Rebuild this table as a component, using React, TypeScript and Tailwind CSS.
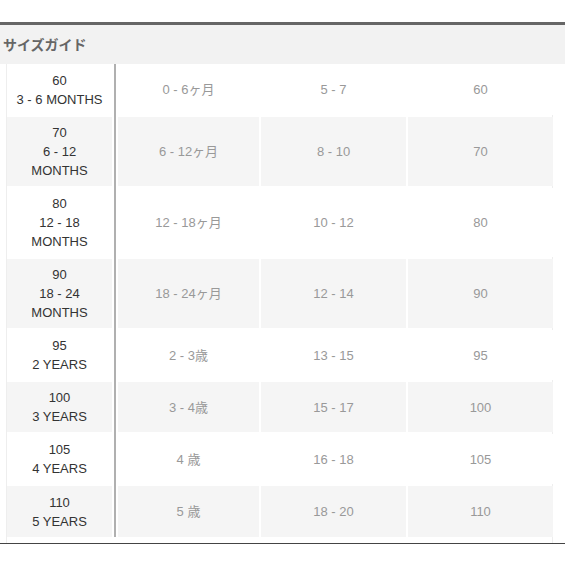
const rows = [
  { size: ["60", "3 - 6 MONTHS"], age: "0 - 6ヶ月", b: "5 - 7", c: "60", h: "h-[51px]" },
  { size: ["70", "6 - 12", "MONTHS"], age: "6 - 12ヶ月", b: "8 - 10", c: "70", h: "h-[69px]" },
  { size: ["80", "12 - 18", "MONTHS"], age: "12 - 18ヶ月", b: "10 - 12", c: "80", h: "h-[69px]" },
  { size: ["90", "18 - 24", "MONTHS"], age: "18 - 24ヶ月", b: "12 - 14", c: "90", h: "h-[69px]" },
  { size: ["95", "2 YEARS"], age: "2 - 3歳", b: "13 - 15", c: "95", h: "h-[50px]" },
  { size: ["100", "3 YEARS"], age: "3 - 4歳", b: "15 - 17", c: "100", h: "h-[50px]" },
  { size: ["105", "4 YEARS"], age: "4 歳", b: "16 - 18", c: "105", h: "h-[50px]" },
  { size: ["110", "5 YEARS"], age: "5 歳", b: "18 - 20", c: "110", h: "h-[51px]" },
];

export default function App() {
  return (
    <div
      className="w-[565px] h-[565px] bg-white overflow-hidden"
      style={{ fontFamily: '"Liberation Sans", Arial, "Noto Sans CJK JP", sans-serif' }}
    >
      <div className="h-[22px]" />
      <div className="border-t-[3px] border-[#666666] bg-[#f2f2f2] h-[42px] flex items-center pl-[3px]">
        <span className="text-[14px] font-bold text-[#666666]" style={{ fontFamily: '"Noto Sans CJK JP", sans-serif' }}>
          サイズガイド
        </span>
      </div>

      <div className="ml-[6px] w-[547px] border-x border-[#eeeeee]">
        <div className="grid grid-cols-[105px_2px_141px_145px_145px] gap-[2px] text-[13px] leading-[19px] text-center">
          <div className="col-start-2 row-start-1 row-span-8 bg-[#b0b0b0]" />
          {rows.map((r, i) => {
            const bg = i % 2 === 1 ? "bg-[#f5f5f5]" : "bg-white";
            return (
              <div key={r.c} className="contents">
                <div className={`${bg} ${r.h} col-start-1 flex flex-col justify-center text-[#333333]`} style={{ gridRowStart: i + 1 }}>
                  {r.size.map((s) => (
                    <span key={s}>{s}</span>
                  ))}
                </div>
                <div className={`${bg} ${r.h} col-start-3 flex items-center justify-center text-[#999999]`} style={{ gridRowStart: i + 1 }}>
                  {r.age}
                </div>
                <div className={`${bg} ${r.h} col-start-4 flex items-center justify-center text-[#999999]`} style={{ gridRowStart: i + 1 }}>
                  {r.b}
                </div>
                <div className={`${bg} ${r.h} col-start-5 flex items-center justify-center text-[#999999]`} style={{ gridRowStart: i + 1 }}>
                  {r.c}
                </div>
              </div>
            );
          })}
        </div>
        <div className="h-[6px]" />
      </div>
      <div className="border-t border-[#444444]" />
    </div>
  );
}
